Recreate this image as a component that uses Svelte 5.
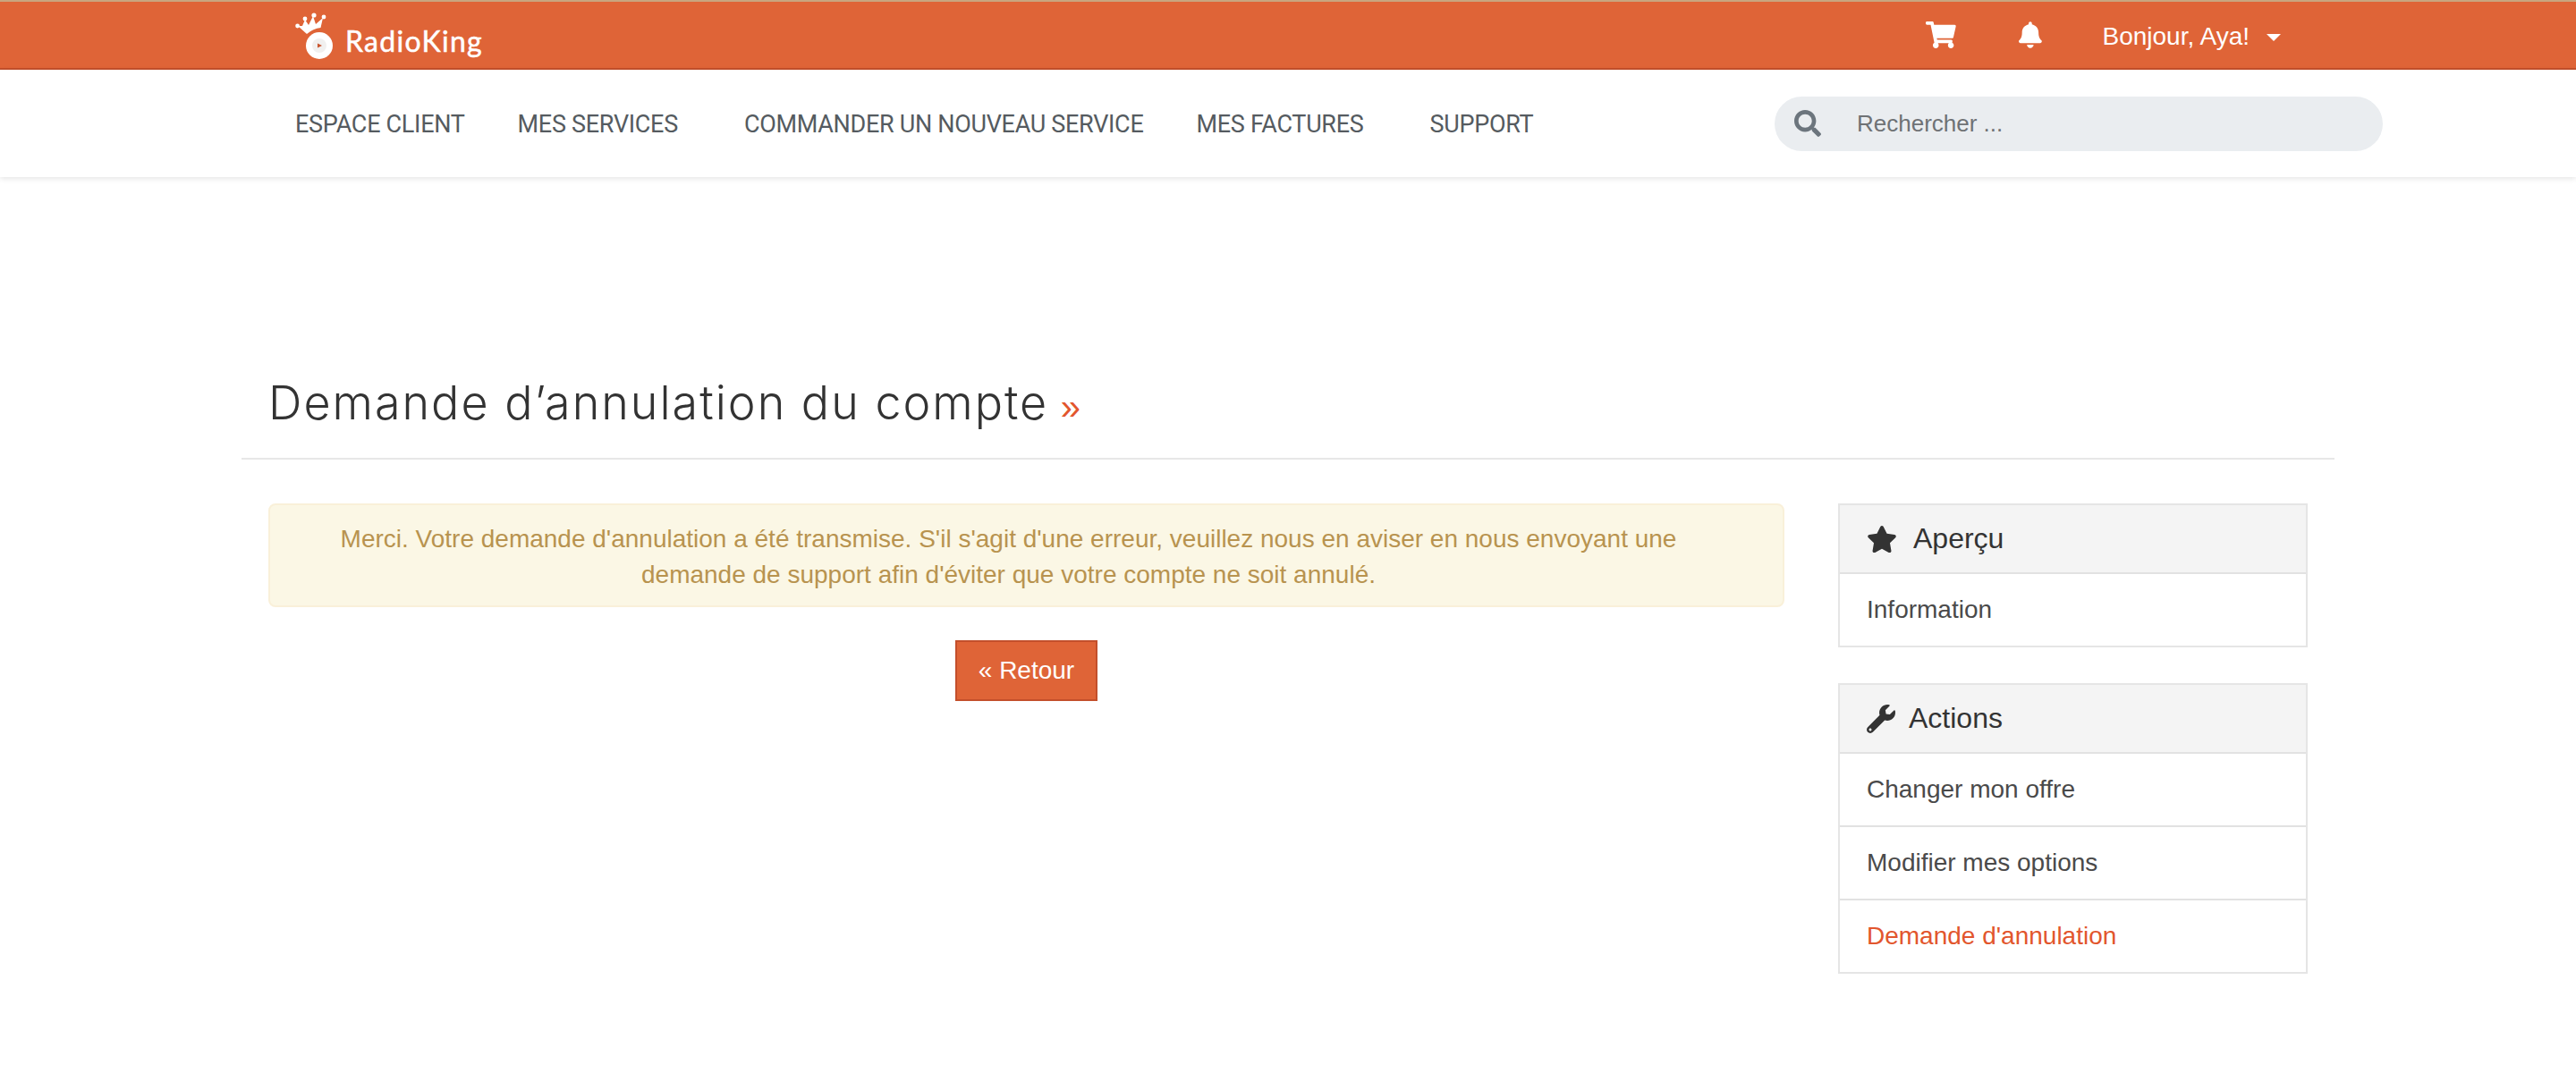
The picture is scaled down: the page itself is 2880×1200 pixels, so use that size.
<script>
    const navItems = [
        { label: 'ESPACE CLIENT', menu: false },
        { label: 'MES SERVICES', menu: true },
        { label: 'COMMANDER UN NOUVEAU SERVICE', menu: false },
        { label: 'MES FACTURES', menu: true },
        { label: 'SUPPORT', menu: false }
    ];
    const actions = [
        { label: 'Changer mon offre', active: false },
        { label: 'Modifier mes options', active: false },
        { label: "Demande d'annulation", active: true }
    ];
</script>

<header class="topbar">
    <a class="logo" href="/">
        <svg class="logo-mark" viewBox="0 0 42 54" aria-hidden="true">
            <g fill="#fff">
                <path d="M3 16 L8 16 L11 9 L15 15 L20 5 L23 14 L31 7 L28.5 18 Q20 19 13 25 Z" />
                <circle cx="2.6" cy="16" r="2.4" />
                <circle cx="11" cy="8" r="2.4" />
                <circle cx="21" cy="4" r="2.6" />
                <circle cx="32" cy="6" r="2.4" />
                <circle cx="27" cy="38" r="15" />
            </g>
            <circle cx="27" cy="38" r="8" fill="#f1f0ef" />
            <path d="M25 35.5 L30 38 L25 40.5 Z" fill="#c9562f" />
        </svg>
        <span class="logo-text">RadioKing</span>
    </a>
    <div class="top-right">
        <svg class="cart" viewBox="0 0 576 512" aria-hidden="true"><path fill="#fff" d="M528.12 301.319l47.273-208C578.806 78.301 567.391 64 551.99 64H159.208l-9.166-44.81C147.758 8.021 137.93 0 126.529 0H24C10.745 0 0 10.745 0 24v16c0 13.255 10.745 24 24 24h69.883l70.248 343.435C147.325 417.1 136 435.222 136 456c0 30.928 25.072 56 56 56s56-25.072 56-56c0-15.674-6.447-29.835-16.824-40h209.647C430.447 426.165 424 440.326 424 456c0 30.928 25.072 56 56 56s56-25.072 56-56c0-22.172-12.888-41.332-31.579-50.405l5.517-24.276c3.413-15.018-8.002-29.319-23.403-29.319H218.117l-6.545-32h293.145c11.206 0 20.92-7.754 23.403-18.681z" /></svg>
        <svg class="bell" viewBox="0 0 448 512" aria-hidden="true"><path fill="#fff" d="M224 512c35.32 0 63.97-28.65 63.97-64H160.03c0 35.35 28.65 64 63.97 64zm215.39-149.71c-19.32-20.76-55.47-51.99-55.47-154.29 0-77.7-54.48-139.9-127.94-155.16V32c0-17.67-14.32-32-31.98-32s-31.98 14.33-31.98 32v20.84C118.56 68.1 64.08 130.3 64.08 208c0 102.3-36.15 133.53-55.47 154.29-6 6.45-8.66 14.16-8.61 21.71.11 16.4 12.98 32 32.1 32h383.8c19.12 0 32-15.6 32.1-32 .05-7.55-2.61-15.27-8.61-21.71z" /></svg>
        <span class="hello">Bonjour, Aya!</span>
        <span class="caret"></span>
    </div>
</header>

<nav class="mainnav">
    <ul class="navlist">
        {#each navItems as item}
            <li class:has-menu={item.menu}>{item.label}</li>
        {/each}
    </ul>
    <div class="search">
        <svg class="search-icon" viewBox="0 0 512 512" aria-hidden="true"><path fill="#6c757d" d="M505 442.7L405.3 343c-4.5-4.5-10.6-7-17-7H372c27.6-35.3 44-79.7 44-128C416 93.1 322.9 0 208 0S0 93.1 0 208s93.1 208 208 208c48.3 0 92.7-16.4 128-44v16.3c0 6.4 2.5 12.5 7 17l99.7 99.7c9.4 9.4 24.6 9.4 33.9 0l28.3-28.3c9.4-9.4 9.4-24.6.1-34zM208 336c-70.7 0-128-57.2-128-128 0-70.7 57.2-128 128-128 70.7 0 128 57.2 128 128 0 70.7-57.2 128-128 128z" /></svg>
        <span class="placeholder">Rechercher ...</span>
    </div>
</nav>

<main class="container">
    <div class="page-title">
        <h1>Demande d’annulation du compte <span class="raquo">»</span></h1>
    </div>

    <div class="columns">
        <section class="content">
            <div class="alert">
                Merci. Votre demande d'annulation a été transmise. S'il s'agit d'une erreur, veuillez nous en aviser en nous envoyant une demande de support afin d'éviter que votre compte ne soit annulé.
            </div>
            <div class="back">
                <a class="btn" href="/">« Retour</a>
            </div>
        </section>

        <aside class="sidebar">
            <div class="panel">
                <div class="panel-head">
                    <svg class="star" viewBox="0 0 576 512" aria-hidden="true"><path fill="#333" d="M259.3 17.8L194 150.2 47.9 171.5c-26.2 3.8-36.7 36.1-17.7 54.6l105.7 103-25 145.5c-4.5 26.3 23.2 46 46.4 33.7L288 439.6l130.7 68.7c23.2 12.2 50.9-7.4 46.4-33.7l-25-145.5 105.7-103c19-18.5 8.5-50.8-17.7-54.6L382 150.2 316.7 17.8c-11.7-23.6-45.6-23.9-57.4 0z" /></svg>
                    <span>Aperçu</span>
                </div>
                <div class="panel-item">Information</div>
            </div>
            <div class="panel">
                <div class="panel-head">
                    <svg class="wrench" viewBox="0 0 512 512" aria-hidden="true"><path fill="#333" d="M507.73 109.1c-2.24-9.03-13.54-12.09-20.12-5.51l-74.36 74.36-67.88-11.31-11.31-67.88 74.36-74.36c6.62-6.62 3.43-17.9-5.66-20.16-47.38-11.74-99.55.91-136.58 37.93-39.64 39.64-50.55 97.1-34.05 147.2L18.74 402.76c-24.99 24.99-24.99 65.51 0 90.5 24.99 24.99 65.51 24.99 90.5 0l213.21-213.21c50.12 16.71 107.47 5.68 147.37-34.22 37.07-37.07 49.7-89.32 37.91-136.73zM64 472c-13.25 0-24-10.75-24-24 0-13.26 10.75-24 24-24s24 10.74 24 24c0 13.25-10.75 24-24 24z" /></svg>
                    <span>Actions</span>
                </div>
                {#each actions as action}
                    <div class="panel-item" class:active={action.active}>{action.label}</div>
                {/each}
            </div>
        </aside>
    </div>
</main>

<style>
    :global(body) {
        margin: 0;
        background: #fff;
        font-family: "Liberation Sans", Arial, sans-serif;
        color: #333;
    }

    .topbar {
        height: 74px;
        background: #df6437;
        border-top: 2px solid #c9a57f;
        border-bottom: 2px solid #c34f2b;
        display: flex;
        align-items: center;
        justify-content: space-between;
        padding: 0 330px;
    }

    .logo {
        display: flex;
        align-items: flex-end;
        gap: 14px;
        text-decoration: none;
        color: #fff;
        margin-top: 2px;
    }

    .logo-mark {
        width: 42px;
        height: 54px;
        display: block;
    }

    .logo-text {
        font-family: Lato, "Noto Sans", sans-serif;
        font-size: 32px;
        font-weight: 400;
        letter-spacing: 1.3px;
        line-height: 42px;
        -webkit-text-stroke: 0.5px #fff;
    }

    .top-right {
        display: flex;
        align-items: center;
        color: #fff;
        white-space: nowrap;
        width: 397px;
        box-sizing: border-box;
    }

    .cart {
        width: 34px;
        height: 30px;
        margin-right: 70px;
    }

    .bell {
        width: 26px;
        height: 30px;
        margin-right: 68px;
    }

    .hello {
        font-size: 28px;
        margin-top: 3px;
        margin-right: 19px;
    }

    .caret {
        width: 0;
        height: 0;
        border-left: 8px solid transparent;
        border-right: 8px solid transparent;
        border-top: 8px solid #fff;
        margin-top: 6px;
    }

    .mainnav {
        height: 120px;
        display: flex;
        align-items: center;
        justify-content: space-between;
        padding: 0 216px 0 330px;
        background: #fff;
        box-shadow: 0 2px 6px rgba(0, 0, 0, 0.1);
        position: relative;
    }

    .navlist {
        list-style: none;
        margin: 2px 0 0;
        padding: 0;
        display: flex;
        gap: 59px;
        font-family: Roboto, "Noto Sans", sans-serif;
        font-size: 27px;
        letter-spacing: -0.3px;
        color: #555b60;
    }

    .has-menu {
        padding-right: 15px;
    }

    .search {
        width: 680px;
        height: 61px;
        border-radius: 31px;
        background: #eaedf0;
        display: flex;
        align-items: center;
        padding-left: 22px;
        box-sizing: border-box;
    }

    .search-icon {
        width: 30px;
        height: 30px;
        margin-right: 40px;
    }

    .placeholder {
        font-size: 26px;
        color: #6f7275;
    }

    .container {
        width: 2340px;
        margin: 0 auto;
    }

    .page-title {
        margin-top: 224px;
        padding: 0 30px 28px;
        border-bottom: 2px solid #e7e7e7;
    }

    h1 {
        margin: 0;
        font-family: Inter, "Noto Sans", sans-serif;
        font-weight: 300;
        font-size: 52px;
        line-height: 58px;
        letter-spacing: 2px;
        color: #333;
    }

    .raquo {
        color: #e2562d;
        font-family: "Liberation Sans", sans-serif;
        font-size: 40px;
        letter-spacing: 0;
        margin-left: -3px;
    }

    .columns {
        display: flex;
        justify-content: space-between;
        padding: 49px 30px 0;
    }

    .content {
        width: 1695px;
    }

    .alert {
        box-sizing: border-box;
        height: 116px;
        padding: 18px 60px 18px 20px;
        background: #fbf7e5;
        border: 2px solid #f9f0d9;
        border-radius: 8px;
        color: #b8934f;
        font-size: 28px;
        line-height: 40px;
        text-align: center;
    }

    .back {
        display: flex;
        justify-content: center;
        margin-top: 37px;
    }

    .btn {
        box-sizing: border-box;
        width: 159px;
        height: 68px;
        display: flex;
        align-items: center;
        justify-content: center;
        background: #df6437;
        border: 2px solid #c34f2b;
        color: #fff;
        font-size: 28px;
        text-decoration: none;
    }

    .sidebar {
        width: 525px;
        display: flex;
        flex-direction: column;
        gap: 40px;
    }

    .panel {
        border: 2px solid #e5e5e5;
    }

    .panel-head {
        height: 75px;
        background: #f4f4f4;
        display: flex;
        align-items: center;
        padding-left: 30px;
        font-size: 32px;
        color: #333;
    }

    .star {
        width: 34px;
        height: 32px;
        margin-right: 18px;
    }

    .wrench {
        width: 32px;
        height: 32px;
        margin-right: 15px;
    }

    .panel-item {
        height: 80px;
        display: flex;
        align-items: center;
        padding-left: 30px;
        border-top: 2px solid #e2e2e2;
        font-size: 28px;
        color: #4a4a4a;
    }

    .panel-item.active {
        color: #e2562d;
    }
</style>
